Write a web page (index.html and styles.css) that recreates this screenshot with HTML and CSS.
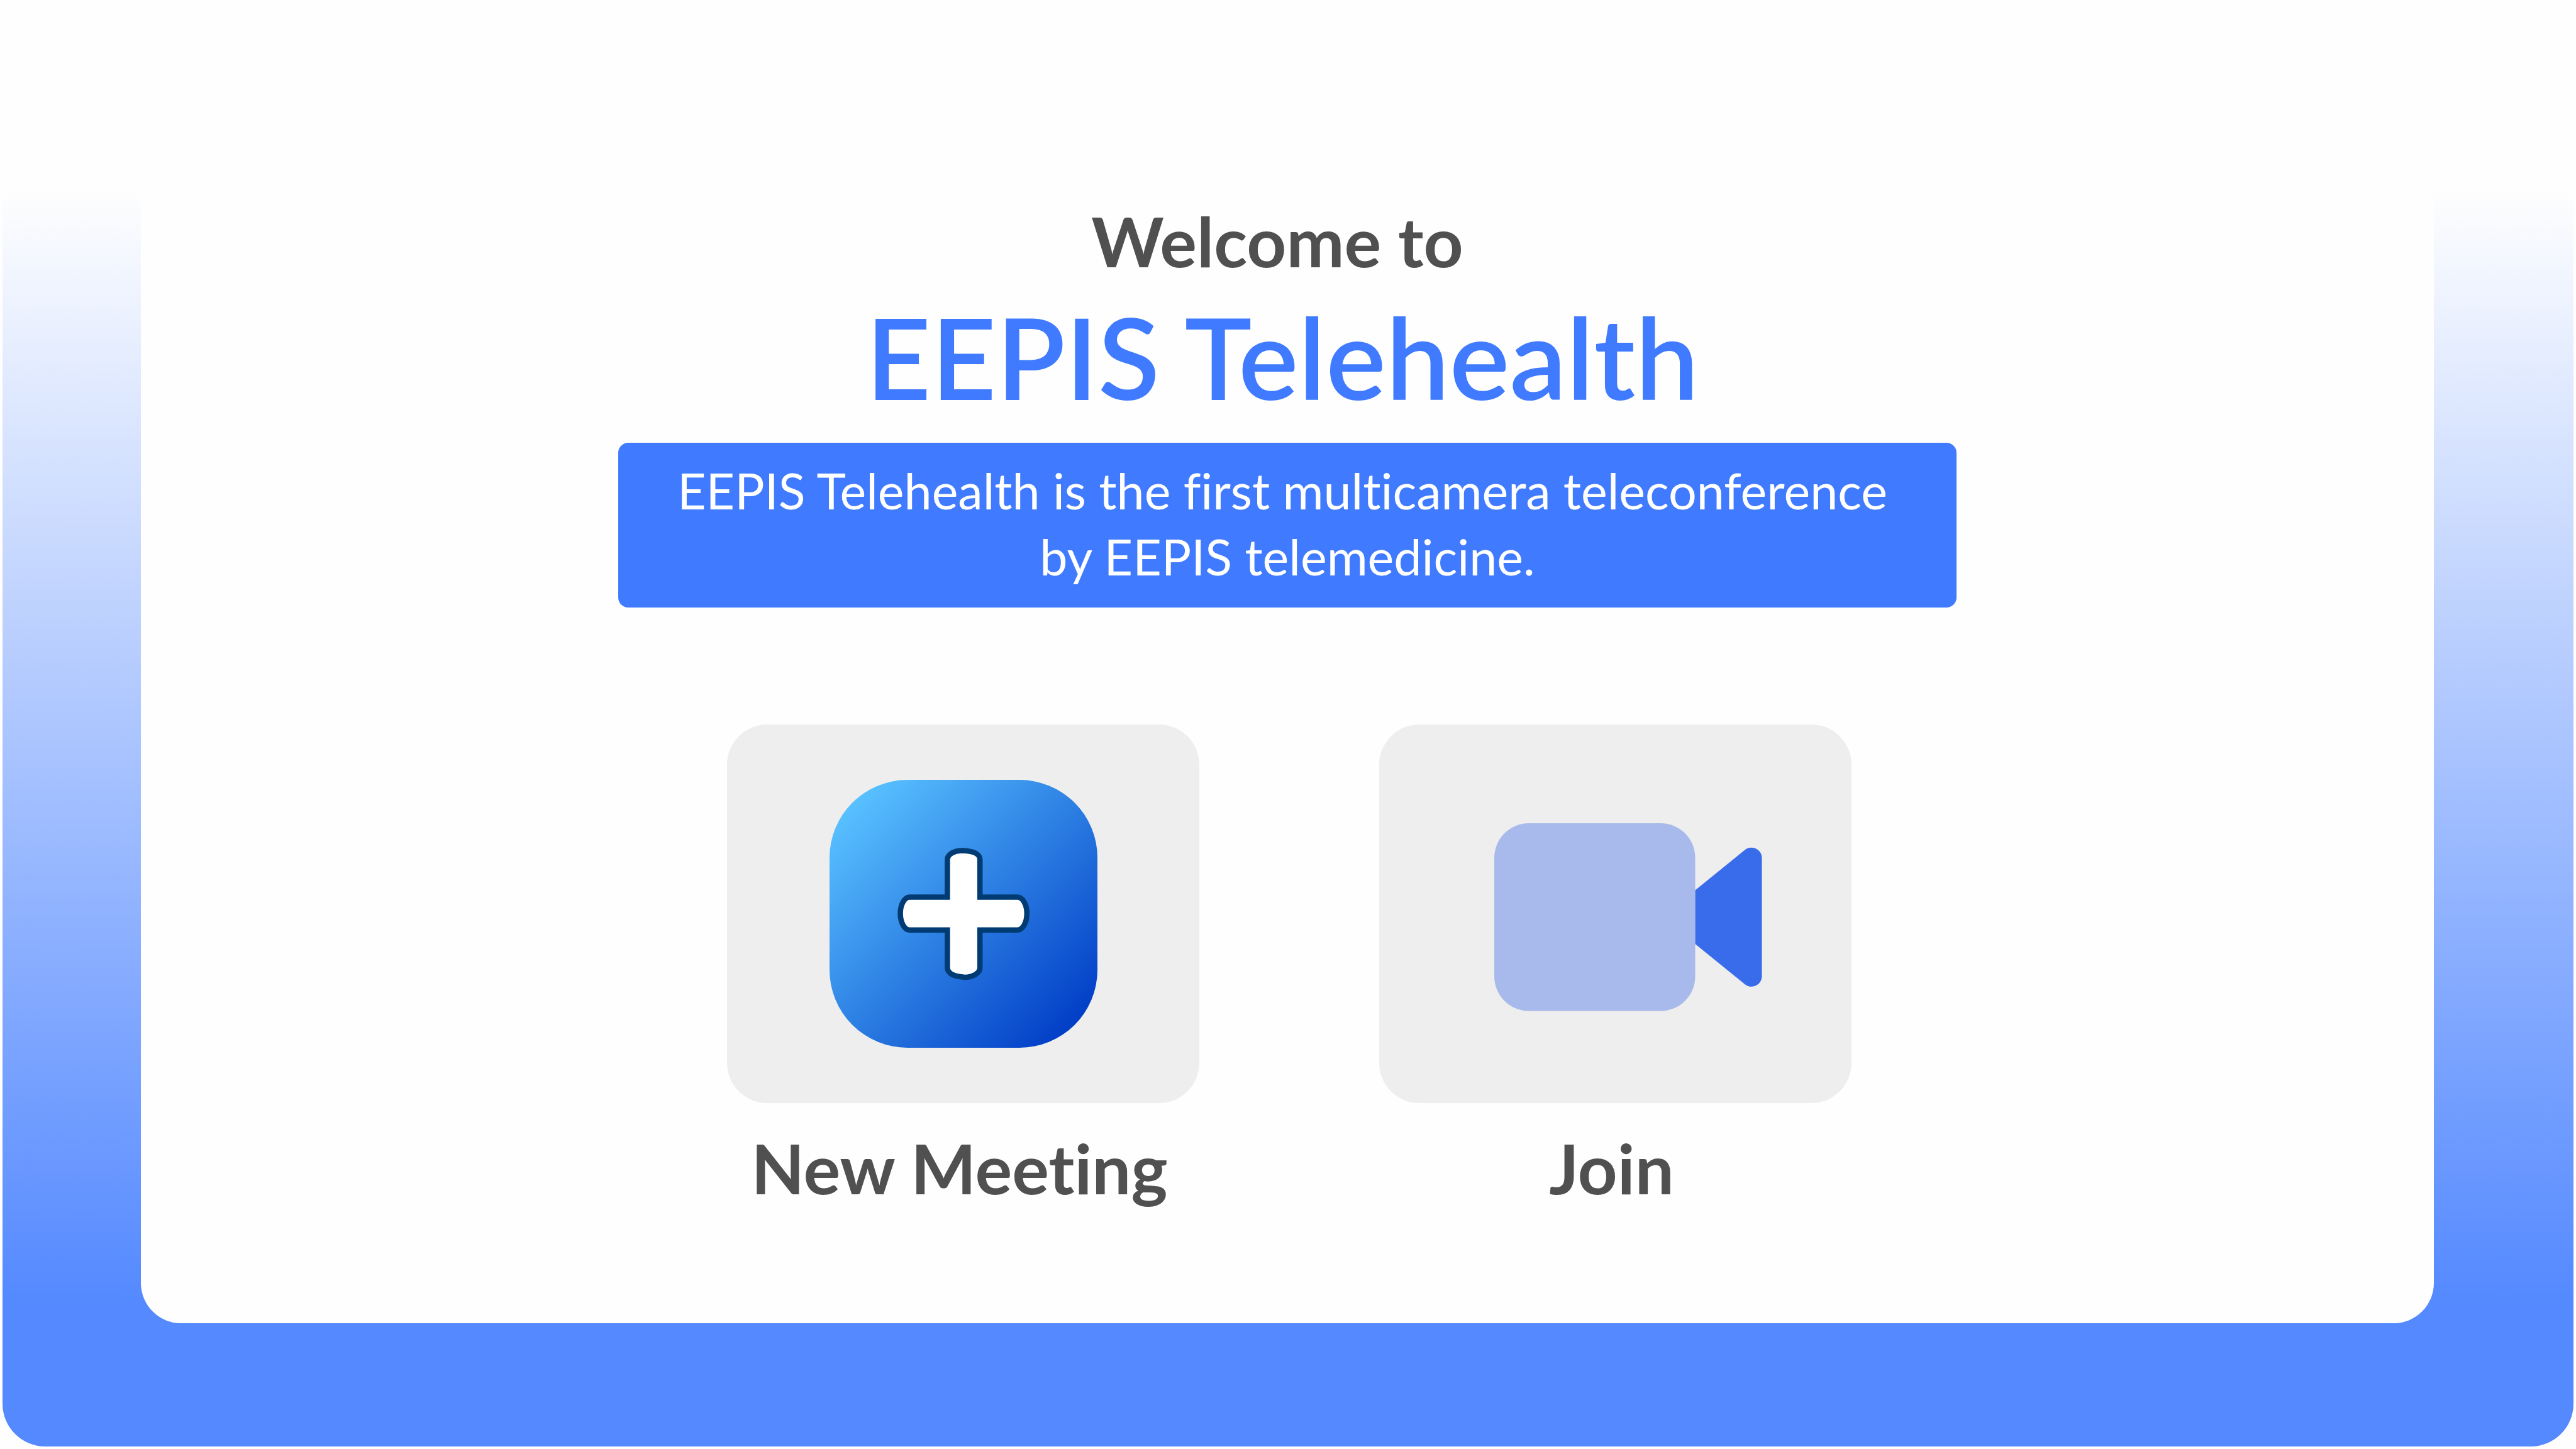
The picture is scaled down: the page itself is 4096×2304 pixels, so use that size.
FILE: index.html
```html
<!DOCTYPE html>
<html lang="en">
<head>
<meta charset="utf-8">
<meta name="viewport" content="width=device-width, initial-scale=1">
<title>EEPIS Telehealth</title>
<link rel="stylesheet" href="styles.css">
</head>
<body class="page">
<div class="frame">
  <main class="panel">
    <h1 class="heading">
      <span class="welcome">Welcome to</span>
      <span class="brand">EEPIS Telehealth</span>
    </h1>
    <p class="intro">
      <span class="intro-lead">EEPIS Telehealth is the first multicamera teleconference</span>
      <span class="intro-rest">by EEPIS telemedicine.</span>
    </p>
    <div class="actions">
      <button class="action" type="button">
        <span class="tile">
          <svg class="icon" viewBox="0 0 426 426" aria-hidden="true">
            <defs>
              <linearGradient id="plus-bg" x1="0.09" y1="0.09" x2="0.93" y2="0.93">
                <stop offset="0" stop-color="#58c0ff"/>
                <stop offset="1" stop-color="#003cc6"/>
              </linearGradient>
            </defs>
            <rect width="426" height="426" rx="124" fill="url(#plus-bg)"/>
            <path d="M187.4 186.6V127C187.4 118 199 112.4 211.8 112.4L218 113C230 114 239.2 118.5 239.2 127V186.6H298.6C307 186.6 313.8 198 313.8 212.6S307 238.8 298.6 238.8H239.2V298.6C239.2 307.6 227.6 314 214.8 314L208 313C196.6 312 187.4 307 187.4 298.6V238.8H127.6C119.2 238.8 112.6 227 112.6 212.6S119.2 186.6 127.6 186.6Z" fill="#fff" stroke="#003b73" stroke-width="8.5"/>
          </svg>
        </span>
        <span class="label">New Meeting</span>
      </button>
      <button class="action" type="button">
        <span class="tile tile-camera">
          <svg class="icon" viewBox="0 0 426 426" aria-hidden="true">
            <rect y="69" width="319.5" height="298.5" rx="55" fill="#a8baeb"/>
            <path d="M319.5 175.5L399 111C409 103 425.5 110 425.5 124.5V312C425.5 326.5 409 333.5 399 325.5L319.5 261Z" fill="#386cea"/>
          </svg>
        </span>
        <span class="label">Join</span>
      </button>
    </div>
  </main>
</div>
</body>
</html>
```
FILE: styles.css
```css
* {
  box-sizing: border-box;
}

.page {
  display: flex;
  min-height: 100vh;
  margin: 0;
  padding: 4px;
  background: #fefefe;
  color: #505050;
  font-family: Lato, "Open Sans", sans-serif;
  font-variant-ligatures: none;
}

.frame {
  display: flex;
  flex: 1;
  padding: 0 222px 196px 220px;
  border-radius: 0 0 68px 68px;
  background: linear-gradient(#fefefe 13%, #5489ff 90%);
}

.panel {
  display: flex;
  flex: 1;
  flex-direction: column;
  align-items: center;
  padding: 314px 0 182px;
  border-radius: 0 0 64px 64px;
  background: #fefefe;
}

.heading {
  display: flex;
  flex-direction: column;
  align-items: center;
  gap: 14px;
  margin: 0 0 32px;
}

.welcome {
  padding-right: 32px;
  font-size: 110px;
  font-weight: 700;
  line-height: 128px;
}

.brand {
  padding-right: 16px;
  color: #407bff;
  font-size: 180px;
  font-weight: 600;
  line-height: 212px;
}

.intro {
  display: flex;
  flex-direction: column;
  align-items: center;
  width: 100%;
  max-width: 2128px;
  margin: 0 0 186px;
  padding: 23px 40px 29px;
  border-radius: 16px;
  background: #407bff;
  color: #fff;
  font-size: 79px;
  font-weight: 400;
  line-height: 105px;
  text-align: center;
}

.intro-lead {
  padding-right: 16px;
}

.actions {
  display: grid;
  grid-template-columns: 1fr 1fr;
  gap: 286px;
  width: 100%;
  max-width: 1794px;
  padding-left: 6px;
}

.action {
  display: flex;
  flex-direction: column;
  align-items: center;
  gap: 38px;
  padding: 0;
  border: 0;
  background: none;
  color: inherit;
  font: inherit;
  font-variant-ligatures: none;
  cursor: pointer;
}

.tile {
  display: flex;
  align-items: center;
  justify-content: center;
  width: 100%;
  padding: 88px 0;
  border-radius: 64px;
  background: #eee;
}

.tile-camera {
  padding-left: 40px;
}

.icon {
  width: 426px;
  height: 426px;
}

.label {
  padding-right: 12px;
  font-size: 110px;
  font-weight: 700;
  line-height: 128px;
}
```
